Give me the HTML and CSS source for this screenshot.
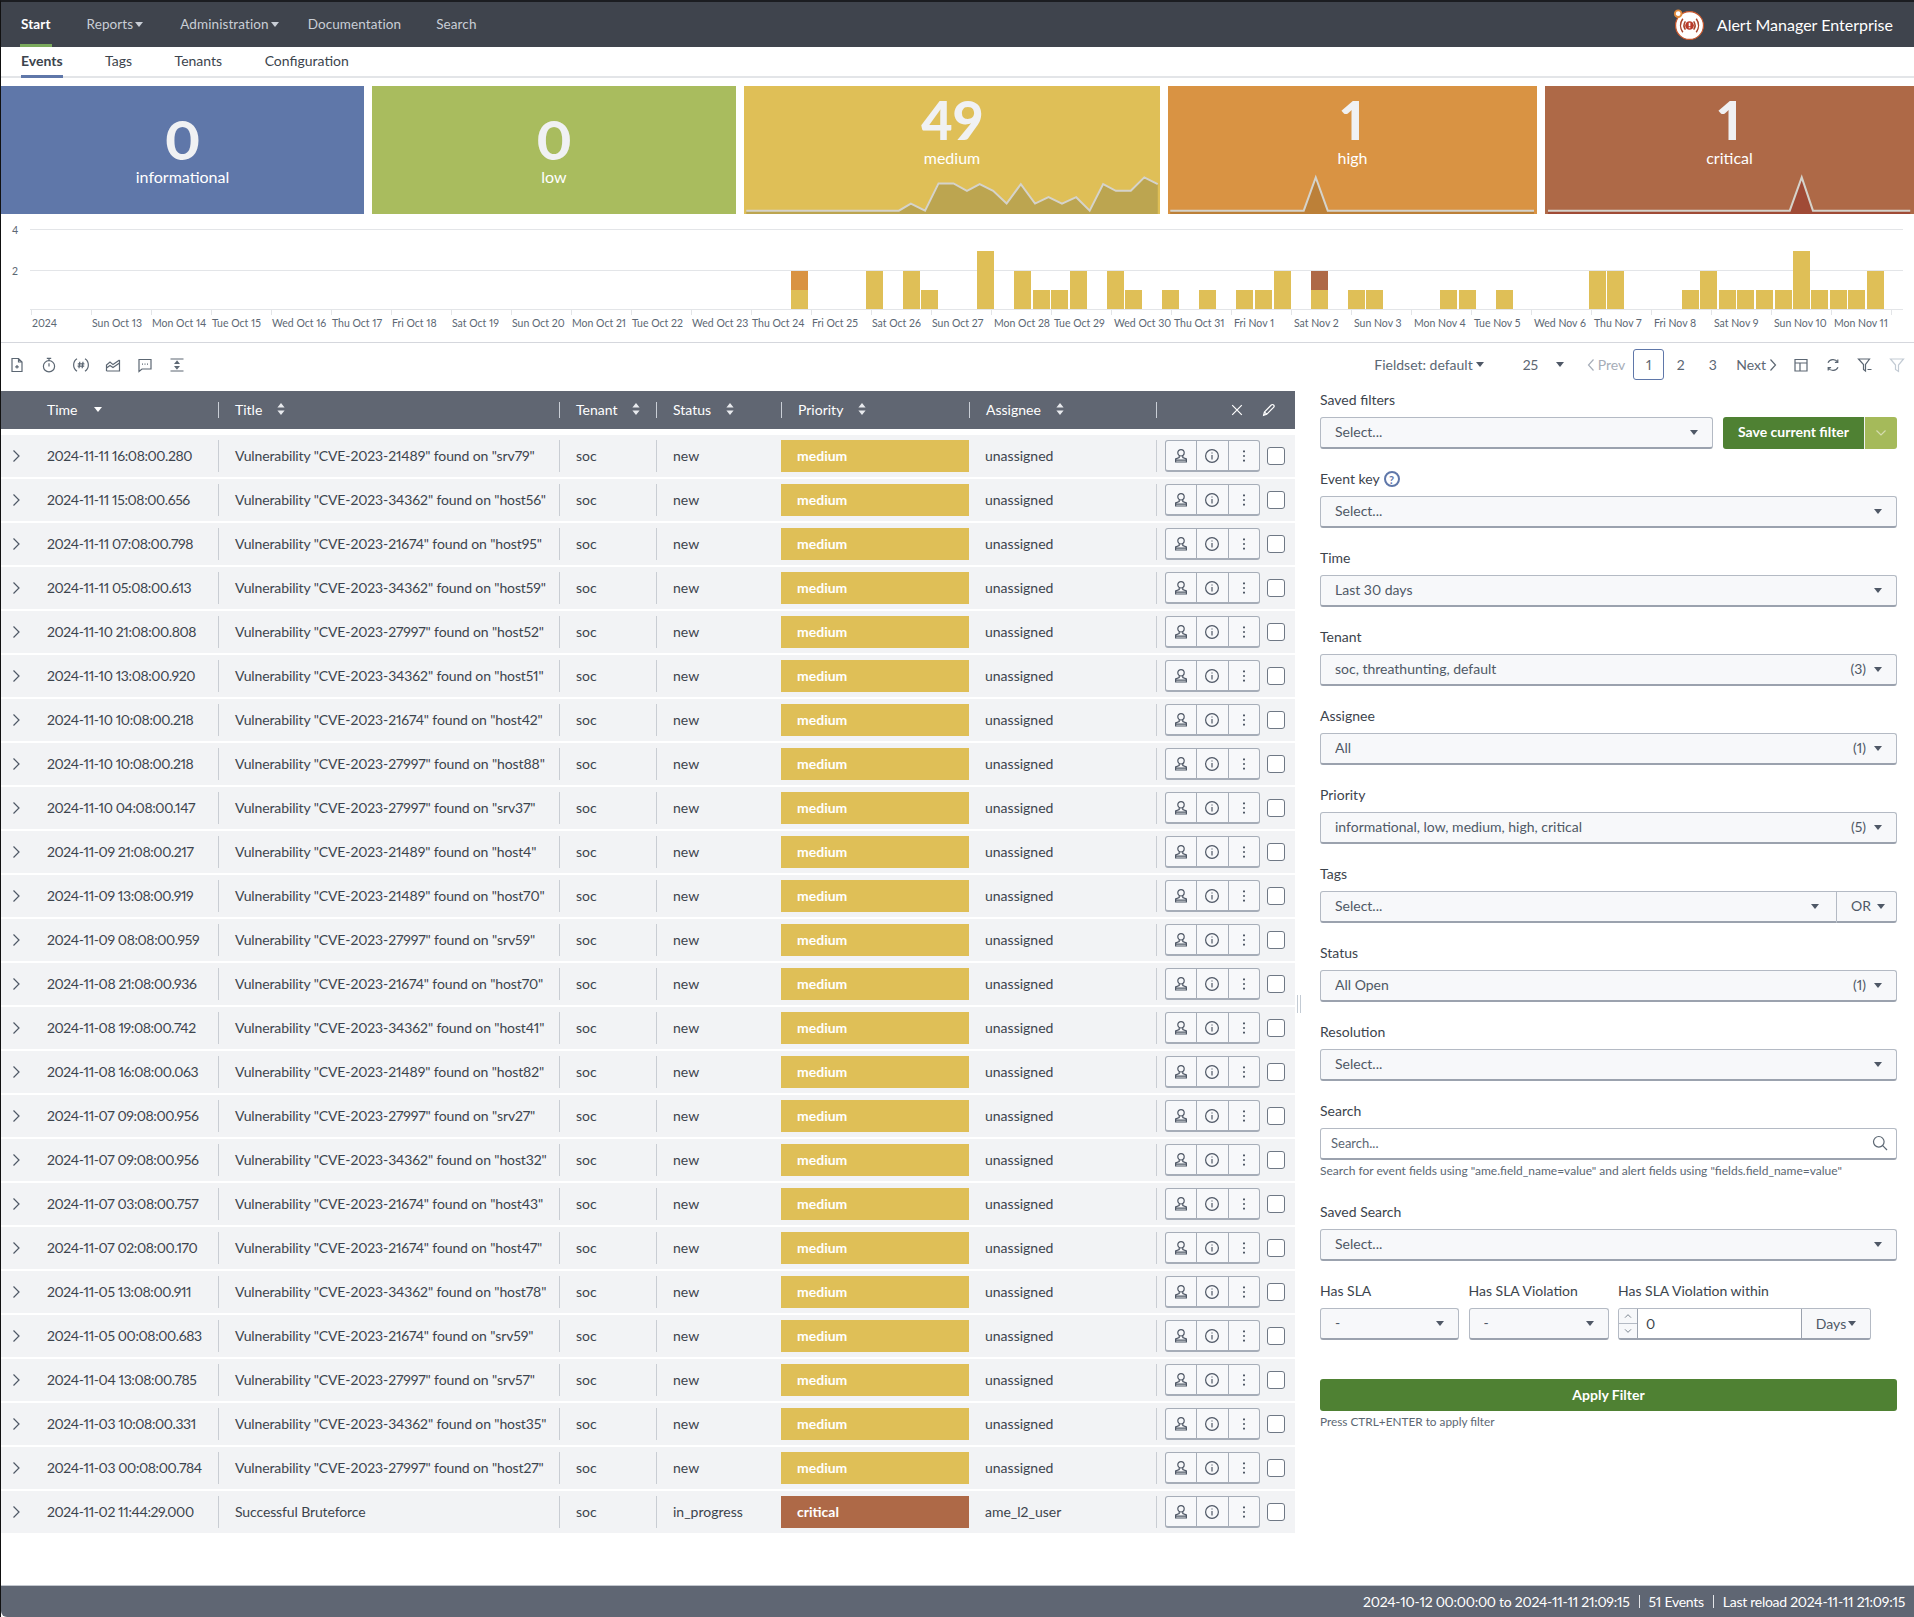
FILE: index.html
```html
<!DOCTYPE html>
<html lang="en">
<head>
<meta charset="utf-8">
<title>Alert Manager Enterprise</title>
<link rel="stylesheet" href="styles.css">
</head>
<body>
<svg class="defs" width="0" height="0" aria-hidden="true">
  <symbol id="i-user" viewBox="0 0 16 16"><circle cx="8" cy="4.8" r="3.2"/><path d="M6.2 8v1.6L2.6 11v3h10.8v-3L9.8 9.6V8M2.6 12.2h10.8"/></symbol>
  <symbol id="i-info" viewBox="0 0 16 16"><circle cx="8" cy="8" r="6.4"/><path d="M8 7v4.4M8 4.6v.9"/></symbol>
  <symbol id="i-more" viewBox="0 0 16 16"><path class="thick" d="M8 2.6v1.6M8 7.2v1.6M8 11.8v1.6"/></symbol>
  <symbol id="i-chev" viewBox="0 0 10 14"><path d="M2.5 1.5 8 7l-5.5 5.5"/></symbol>
  <symbol id="i-sort" viewBox="0 0 10 14"><path class="solid" d="M5 1 8.6 5.6H1.4zM5 13 1.4 8.4h7.2z"/></symbol>
  <symbol id="i-x" viewBox="0 0 14 14"><path d="M2.2 2.2l9.6 9.6M11.8 2.2l-9.6 9.6"/></symbol>
  <symbol id="i-pen" viewBox="0 0 14 14"><path d="M1.6 12.4l.8-3.4 6.9-7a1.6 1.6 0 0 1 2.3 2.3l-6.9 7zM2.4 9l2.6 2.4"/></symbol>
  <symbol id="i-doc" viewBox="0 0 16 16"><path d="M3 1.5h6.5L13 5v9.5H3zM9.5 1.5V5H13M8 8v3.6M6.2 9.8h3.6"/></symbol>
  <symbol id="i-watch" viewBox="0 0 16 16"><circle cx="8" cy="9.3" r="5.6"/><path d="M5.8 1.3h4.4M8 1.3v2.4M8 6.2v3.2"/></symbol>
  <symbol id="i-hash" viewBox="0 0 16 16"><path d="M4 1.8A7.4 7.4 0 0 0 4 14.2M12 1.8a7.4 7.4 0 0 1 0 12.4M6.8 4.8 6 11.2M10 4.8l-.8 6.4M4.8 6.8h6.6M4.6 9.2h6.6"/></symbol>
  <symbol id="i-area" viewBox="0 0 16 16"><path d="M1.5 14h13V3M1.5 14V8l3.5-3 3 2.6L14.500 3M1.500 11l3.500-2.600 3 2.200 6.500-4.600"/></symbol>
  <symbol id="i-chat" viewBox="0 0 16 16"><path d="M2 2.500h12v9.500H5l-3 2.500zM5 7.200h1M7.500 7.200h1M10 7.200h1"/></symbol>
  <symbol id="i-gap" viewBox="0 0 16 16"><path d="M1.500 2h13M1.500 14h13M8 4.300 6.300 6.300h3.400zM8 11.700l1.700-2H6.300z"/></symbol>
  <symbol id="i-table" viewBox="0 0 16 16"><path d="M2 2.500h12v11.500H2zM2 6h12M7 6v8"/></symbol>
  <symbol id="i-reload" viewBox="0 0 16 16"><path d="M3 5.800A5.600 5.600 0 0 1 12.700 5M13 10.200A5.600 5.600 0 0 1 3.300 11M12.800 2.400v2.900H9.900M3.200 13.600v-2.900h2.900"/></symbol>
  <symbol id="i-fminus" viewBox="0 0 16 16"><path d="M1.500 2h11L8.500 7.500V14l-2-1.500v-5zM10.500 12.500h4"/></symbol>
  <symbol id="i-filter" viewBox="0 0 16 16"><path d="M1.500 2h13L9.500 8v6.500l-3-2V8z"/></symbol>
  <symbol id="i-search" viewBox="0 0 16 16"><circle cx="6.800" cy="6.800" r="5.300"/><path d="m10.700 10.700 4.300 4.300"/></symbol>
  <symbol id="i-down" viewBox="0 0 12 8"><path d="M1.500 1.500 6 6l4.500-4.500"/></symbol>
  <symbol id="i-lt" viewBox="0 0 8 14"><path d="M6.500 1.500 1.500 7l5 5.500"/></symbol>
  <symbol id="i-gt" viewBox="0 0 8 14"><path d="M1.500 1.500 6.500 7l-5 5.500"/></symbol>
</svg>

<div class="app">
  <header class="nav">
    <a class="nav-item active">Start</a>
    <a class="nav-item">Reports<i class="caret"></i></a>
    <a class="nav-item">Administration<i class="caret"></i></a>
    <a class="nav-item">Documentation</a>
    <a class="nav-item">Search</a>
    <div class="brand">
      <svg class="logo" viewBox="0 0 30 30">
        <circle class="logo-body" cx="16" cy="16" r="13.500"/>
        <path class="logo-arc" d="M9.500 9.500a11 11 0 0 0 0 13M22.500 9.500a11 11 0 0 1 0 13M12 12a7 7 0 0 0 0 8M20 12a7 7 0 0 1 0 8"/>
        <circle class="logo-core" cx="16" cy="16" r="4.200"/>
        <path class="logo-mark" d="M16 13.400v3.200M16 17.600v1"/>
        <circle class="logo-dot" cx="5" cy="4.500" r="3.200"/>
      </svg>
      <span class="brand-name">Alert Manager Enterprise</span>
    </div>
  </header>

  <nav class="subnav">
    <a class="sub-item active">Events</a>
    <a class="sub-item">Tags</a>
    <a class="sub-item">Tenants</a>
    <a class="sub-item">Configuration</a>
  </nav>

  <section class="cards">
    <div class="card info"><b class="num">0</b><span class="lbl">informational</span></div>
    <div class="card low"><b class="num">0</b><span class="lbl">low</span></div>
    <div class="card medium spark-card"><b class="num">49</b><span class="lbl">medium</span>
      <svg class="spark" viewBox="5 520 556 122" preserveAspectRatio="none"><path class="spark-fill medium-fill" d="M8 642V632H212L228 611 247 632 265 551H285L303 573 320 553 338 573 356 611 375 553 394 611 412 592 430 611 449 592 467 632 485 553 502 573H522L540 533 558 553V642Z"/><path class="spark-line" d="M8 632H212L228 611 247 632 265 551H285L303 573 320 553 338 573 356 611 375 553 394 611 412 592 430 611 449 592 467 632 485 553 502 573H522L540 533 558 553"/></svg>
    </div>
    <div class="card high spark-card"><b class="num">1</b><span class="lbl">high</span>
      <svg class="spark" viewBox="572 520 492 122" preserveAspectRatio="none"><path class="spark-fill high-fill" d="M575 642V632H753L769 533 785 632H1060V642Z"/><path class="spark-line" d="M575 632H753L769 533 785 632H1060"/></svg>
    </div>
    <div class="card critical spark-card"><b class="num">1</b><span class="lbl">critical</span>
      <svg class="spark" viewBox="1075 520 493 122" preserveAspectRatio="none"><path class="spark-fill critical-fill" d="M1079 642V632H1402L1418 533 1433 632H1563V642Z"/><path class="spark-line" d="M1079 632H1402L1418 533 1433 632H1563"/></svg>
    </div>
  </section>

  <svg class="chart" viewBox="1 214 1913 128">
    <g class="grid"><path d="M30 229.500H1903M30 270.500H1903M30 309.500H1903"/>
      <path d="M31.500 309v6M91.500 309v6M151.500 309v6M211.500 309v6M271.500 309v6M331.500 309v6M391.500 309v6M451.500 309v6M511.500 309v6M571.500 309v6M631.500 309v6M691.500 309v6M751.500 309v6M811.500 309v6M871.500 309v6M931.500 309v6M991.500 309v6M1051.500 309v6M1111.500 309v6M1171.500 309v6M1231.500 309v6M1291.500 309v6M1351.500 309v6M1411.500 309v6M1471.500 309v6M1531.500 309v6M1591.500 309v6M1651.500 309v6M1711.500 309v6M1771.500 309v6M1831.500 309v6M1891.500 309v6"/></g>
    <g class="axis-y"><text x="12" y="234">4</text><text x="12" y="275">2</text></g>
    <g class="bars">
      <rect x="791" y="290" width="17" height="19"/><rect class="bar-high" x="791" y="271" width="17" height="19"/>
      <rect x="866" y="271" width="17" height="38"/><rect x="903" y="271" width="17" height="38"/><rect x="921" y="290" width="17" height="19"/>
      <rect x="977" y="251" width="17" height="58"/><rect x="1014" y="271" width="17" height="38"/><rect x="1033" y="290" width="17" height="19"/>
      <rect x="1051" y="290" width="17" height="19"/><rect x="1070" y="271" width="17" height="38"/><rect x="1107" y="271" width="17" height="38"/>
      <rect x="1125" y="290" width="17" height="19"/><rect x="1162" y="290" width="17" height="19"/><rect x="1199" y="290" width="17" height="19"/>
      <rect x="1236" y="290" width="17" height="19"/><rect x="1255" y="290" width="17" height="19"/><rect x="1274" y="271" width="17" height="38"/>
      <rect x="1311" y="290" width="17" height="19"/><rect class="bar-crit" x="1311" y="271" width="17" height="19"/>
      <rect x="1348" y="290" width="17" height="19"/><rect x="1366" y="290" width="17" height="19"/><rect x="1440" y="290" width="17" height="19"/>
      <rect x="1459" y="290" width="17" height="19"/><rect x="1496" y="290" width="17" height="19"/><rect x="1589" y="271" width="17" height="38"/>
      <rect x="1607" y="271" width="17" height="38"/><rect x="1682" y="290" width="17" height="19"/><rect x="1700" y="271" width="17" height="38"/>
      <rect x="1719" y="290" width="17" height="19"/><rect x="1737" y="290" width="17" height="19"/><rect x="1756" y="290" width="17" height="19"/>
      <rect x="1775" y="290" width="17" height="19"/><rect x="1793" y="251" width="17" height="58"/><rect x="1811" y="290" width="17" height="19"/>
      <rect x="1830" y="290" width="17" height="19"/><rect x="1848" y="290" width="17" height="19"/><rect x="1867" y="271" width="17" height="38"/>
    </g>
    <g class="axis-x">
      <text x="32" y="327">2024</text><text x="92" y="327">Sun Oct 13</text><text x="152" y="327">Mon Oct 14</text><text x="212" y="327">Tue Oct 15</text><text x="272" y="327">Wed Oct 16</text><text x="332" y="327">Thu Oct 17</text><text x="392" y="327">Fri Oct 18</text><text x="452" y="327">Sat Oct 19</text><text x="512" y="327">Sun Oct 20</text><text x="572" y="327">Mon Oct 21</text><text x="632" y="327">Tue Oct 22</text><text x="692" y="327">Wed Oct 23</text><text x="752" y="327">Thu Oct 24</text><text x="812" y="327">Fri Oct 25</text><text x="872" y="327">Sat Oct 26</text><text x="932" y="327">Sun Oct 27</text><text x="994" y="327">Mon Oct 28</text><text x="1054" y="327">Tue Oct 29</text><text x="1114" y="327">Wed Oct 30</text><text x="1174" y="327">Thu Oct 31</text><text x="1234" y="327">Fri Nov 1</text><text x="1294" y="327">Sat Nov 2</text><text x="1354" y="327">Sun Nov 3</text><text x="1414" y="327">Mon Nov 4</text><text x="1474" y="327">Tue Nov 5</text><text x="1534" y="327">Wed Nov 6</text><text x="1594" y="327">Thu Nov 7</text><text x="1654" y="327">Fri Nov 8</text><text x="1714" y="327">Sat Nov 9</text><text x="1774" y="327">Sun Nov 10</text><text x="1834" y="327">Mon Nov 11</text>
    </g>
  </svg>

  <section class="toolbar">
    <div class="tb-left">
      <span class="tool"><svg class="ic"><use href="#i-doc"/></svg></span>
      <span class="tool"><svg class="ic"><use href="#i-watch"/></svg></span>
      <span class="tool"><svg class="ic"><use href="#i-hash"/></svg></span>
      <span class="tool"><svg class="ic"><use href="#i-area"/></svg></span>
      <span class="tool"><svg class="ic"><use href="#i-chat"/></svg></span>
      <span class="tool"><svg class="ic"><use href="#i-gap"/></svg></span>
    </div>
    <div class="tb-right">
      <span class="fieldset">Fieldset: default<i class="caret dark"></i></span>
      <span class="perpage">25<i class="caret dark"></i></span>
      <span class="prev"><svg class="lt"><use href="#i-lt"/></svg>Prev</span>
      <span class="page cur">1</span>
      <span class="page">2</span>
      <span class="page">3</span>
      <span class="next">Next<svg class="lt"><use href="#i-gt"/></svg></span>
      <span class="tool"><svg class="ic"><use href="#i-table"/></svg></span>
      <span class="tool"><svg class="ic"><use href="#i-reload"/></svg></span>
      <span class="tool"><svg class="ic"><use href="#i-fminus"/></svg></span>
      <span class="tool faded"><svg class="ic"><use href="#i-filter"/></svg></span>
    </div>
  </section>

  <main class="main">
    <section class="table">
      <div class="thead row-grid">
        <div class="th th-time">Time<i class="caret sort-caret"></i></div>
        <div class="th">Title<svg class="sort"><use href="#i-sort"/></svg></div>
        <div class="th">Tenant<svg class="sort"><use href="#i-sort"/></svg></div>
        <div class="th">Status<svg class="sort"><use href="#i-sort"/></svg></div>
        <div class="th">Priority<svg class="sort"><use href="#i-sort"/></svg></div>
        <div class="th">Assignee<svg class="sort"><use href="#i-sort"/></svg></div>
        <div class="th th-act"><svg class="hd-ic"><use href="#i-x"/></svg><svg class="hd-ic"><use href="#i-pen"/></svg></div>
      </div>

      <div class="row row-grid"><div class="td time"><svg class="exp"><use href="#i-chev"/></svg>2024-11-11 16:08:00.280</div><div class="td sep title">Vulnerability "CVE-2023-21489" found on "srv79"</div><div class="td sep">soc</div><div class="td sep">new</div><div class="td prio medium">medium</div><div class="td">unassigned</div><div class="td sep acts-cell"><div class="acts"><span class="act"><svg class="ic"><use href="#i-user"/></svg></span><span class="act"><svg class="ic"><use href="#i-info"/></svg></span><span class="act"><svg class="ic"><use href="#i-more"/></svg></span></div><span class="check"></span></div></div>
      <div class="row row-grid"><div class="td time"><svg class="exp"><use href="#i-chev"/></svg>2024-11-11 15:08:00.656</div><div class="td sep title">Vulnerability "CVE-2023-34362" found on "host56"</div><div class="td sep">soc</div><div class="td sep">new</div><div class="td prio medium">medium</div><div class="td">unassigned</div><div class="td sep acts-cell"><div class="acts"><span class="act"><svg class="ic"><use href="#i-user"/></svg></span><span class="act"><svg class="ic"><use href="#i-info"/></svg></span><span class="act"><svg class="ic"><use href="#i-more"/></svg></span></div><span class="check"></span></div></div>
      <div class="row row-grid"><div class="td time"><svg class="exp"><use href="#i-chev"/></svg>2024-11-11 07:08:00.798</div><div class="td sep title">Vulnerability "CVE-2023-21674" found on "host95"</div><div class="td sep">soc</div><div class="td sep">new</div><div class="td prio medium">medium</div><div class="td">unassigned</div><div class="td sep acts-cell"><div class="acts"><span class="act"><svg class="ic"><use href="#i-user"/></svg></span><span class="act"><svg class="ic"><use href="#i-info"/></svg></span><span class="act"><svg class="ic"><use href="#i-more"/></svg></span></div><span class="check"></span></div></div>
      <div class="row row-grid"><div class="td time"><svg class="exp"><use href="#i-chev"/></svg>2024-11-11 05:08:00.613</div><div class="td sep title">Vulnerability "CVE-2023-34362" found on "host59"</div><div class="td sep">soc</div><div class="td sep">new</div><div class="td prio medium">medium</div><div class="td">unassigned</div><div class="td sep acts-cell"><div class="acts"><span class="act"><svg class="ic"><use href="#i-user"/></svg></span><span class="act"><svg class="ic"><use href="#i-info"/></svg></span><span class="act"><svg class="ic"><use href="#i-more"/></svg></span></div><span class="check"></span></div></div>
      <div class="row row-grid"><div class="td time"><svg class="exp"><use href="#i-chev"/></svg>2024-11-10 21:08:00.808</div><div class="td sep title">Vulnerability "CVE-2023-27997" found on "host52"</div><div class="td sep">soc</div><div class="td sep">new</div><div class="td prio medium">medium</div><div class="td">unassigned</div><div class="td sep acts-cell"><div class="acts"><span class="act"><svg class="ic"><use href="#i-user"/></svg></span><span class="act"><svg class="ic"><use href="#i-info"/></svg></span><span class="act"><svg class="ic"><use href="#i-more"/></svg></span></div><span class="check"></span></div></div>
      <div class="row row-grid"><div class="td time"><svg class="exp"><use href="#i-chev"/></svg>2024-11-10 13:08:00.920</div><div class="td sep title">Vulnerability "CVE-2023-34362" found on "host51"</div><div class="td sep">soc</div><div class="td sep">new</div><div class="td prio medium">medium</div><div class="td">unassigned</div><div class="td sep acts-cell"><div class="acts"><span class="act"><svg class="ic"><use href="#i-user"/></svg></span><span class="act"><svg class="ic"><use href="#i-info"/></svg></span><span class="act"><svg class="ic"><use href="#i-more"/></svg></span></div><span class="check"></span></div></div>
      <div class="row row-grid"><div class="td time"><svg class="exp"><use href="#i-chev"/></svg>2024-11-10 10:08:00.218</div><div class="td sep title">Vulnerability "CVE-2023-21674" found on "host42"</div><div class="td sep">soc</div><div class="td sep">new</div><div class="td prio medium">medium</div><div class="td">unassigned</div><div class="td sep acts-cell"><div class="acts"><span class="act"><svg class="ic"><use href="#i-user"/></svg></span><span class="act"><svg class="ic"><use href="#i-info"/></svg></span><span class="act"><svg class="ic"><use href="#i-more"/></svg></span></div><span class="check"></span></div></div>
      <div class="row row-grid"><div class="td time"><svg class="exp"><use href="#i-chev"/></svg>2024-11-10 10:08:00.218</div><div class="td sep title">Vulnerability "CVE-2023-27997" found on "host88"</div><div class="td sep">soc</div><div class="td sep">new</div><div class="td prio medium">medium</div><div class="td">unassigned</div><div class="td sep acts-cell"><div class="acts"><span class="act"><svg class="ic"><use href="#i-user"/></svg></span><span class="act"><svg class="ic"><use href="#i-info"/></svg></span><span class="act"><svg class="ic"><use href="#i-more"/></svg></span></div><span class="check"></span></div></div>
      <div class="row row-grid"><div class="td time"><svg class="exp"><use href="#i-chev"/></svg>2024-11-10 04:08:00.147</div><div class="td sep title">Vulnerability "CVE-2023-27997" found on "srv37"</div><div class="td sep">soc</div><div class="td sep">new</div><div class="td prio medium">medium</div><div class="td">unassigned</div><div class="td sep acts-cell"><div class="acts"><span class="act"><svg class="ic"><use href="#i-user"/></svg></span><span class="act"><svg class="ic"><use href="#i-info"/></svg></span><span class="act"><svg class="ic"><use href="#i-more"/></svg></span></div><span class="check"></span></div></div>
      <div class="row row-grid"><div class="td time"><svg class="exp"><use href="#i-chev"/></svg>2024-11-09 21:08:00.217</div><div class="td sep title">Vulnerability "CVE-2023-21489" found on "host4"</div><div class="td sep">soc</div><div class="td sep">new</div><div class="td prio medium">medium</div><div class="td">unassigned</div><div class="td sep acts-cell"><div class="acts"><span class="act"><svg class="ic"><use href="#i-user"/></svg></span><span class="act"><svg class="ic"><use href="#i-info"/></svg></span><span class="act"><svg class="ic"><use href="#i-more"/></svg></span></div><span class="check"></span></div></div>
      <div class="row row-grid"><div class="td time"><svg class="exp"><use href="#i-chev"/></svg>2024-11-09 13:08:00.919</div><div class="td sep title">Vulnerability "CVE-2023-21489" found on "host70"</div><div class="td sep">soc</div><div class="td sep">new</div><div class="td prio medium">medium</div><div class="td">unassigned</div><div class="td sep acts-cell"><div class="acts"><span class="act"><svg class="ic"><use href="#i-user"/></svg></span><span class="act"><svg class="ic"><use href="#i-info"/></svg></span><span class="act"><svg class="ic"><use href="#i-more"/></svg></span></div><span class="check"></span></div></div>
      <div class="row row-grid"><div class="td time"><svg class="exp"><use href="#i-chev"/></svg>2024-11-09 08:08:00.959</div><div class="td sep title">Vulnerability "CVE-2023-27997" found on "srv59"</div><div class="td sep">soc</div><div class="td sep">new</div><div class="td prio medium">medium</div><div class="td">unassigned</div><div class="td sep acts-cell"><div class="acts"><span class="act"><svg class="ic"><use href="#i-user"/></svg></span><span class="act"><svg class="ic"><use href="#i-info"/></svg></span><span class="act"><svg class="ic"><use href="#i-more"/></svg></span></div><span class="check"></span></div></div>
      <div class="row row-grid"><div class="td time"><svg class="exp"><use href="#i-chev"/></svg>2024-11-08 21:08:00.936</div><div class="td sep title">Vulnerability "CVE-2023-21674" found on "host70"</div><div class="td sep">soc</div><div class="td sep">new</div><div class="td prio medium">medium</div><div class="td">unassigned</div><div class="td sep acts-cell"><div class="acts"><span class="act"><svg class="ic"><use href="#i-user"/></svg></span><span class="act"><svg class="ic"><use href="#i-info"/></svg></span><span class="act"><svg class="ic"><use href="#i-more"/></svg></span></div><span class="check"></span></div></div>
      <div class="row row-grid"><div class="td time"><svg class="exp"><use href="#i-chev"/></svg>2024-11-08 19:08:00.742</div><div class="td sep title">Vulnerability "CVE-2023-34362" found on "host41"</div><div class="td sep">soc</div><div class="td sep">new</div><div class="td prio medium">medium</div><div class="td">unassigned</div><div class="td sep acts-cell"><div class="acts"><span class="act"><svg class="ic"><use href="#i-user"/></svg></span><span class="act"><svg class="ic"><use href="#i-info"/></svg></span><span class="act"><svg class="ic"><use href="#i-more"/></svg></span></div><span class="check"></span></div></div>
      <div class="row row-grid"><div class="td time"><svg class="exp"><use href="#i-chev"/></svg>2024-11-08 16:08:00.063</div><div class="td sep title">Vulnerability "CVE-2023-21489" found on "host82"</div><div class="td sep">soc</div><div class="td sep">new</div><div class="td prio medium">medium</div><div class="td">unassigned</div><div class="td sep acts-cell"><div class="acts"><span class="act"><svg class="ic"><use href="#i-user"/></svg></span><span class="act"><svg class="ic"><use href="#i-info"/></svg></span><span class="act"><svg class="ic"><use href="#i-more"/></svg></span></div><span class="check"></span></div></div>
      <div class="row row-grid"><div class="td time"><svg class="exp"><use href="#i-chev"/></svg>2024-11-07 09:08:00.956</div><div class="td sep title">Vulnerability "CVE-2023-27997" found on "srv27"</div><div class="td sep">soc</div><div class="td sep">new</div><div class="td prio medium">medium</div><div class="td">unassigned</div><div class="td sep acts-cell"><div class="acts"><span class="act"><svg class="ic"><use href="#i-user"/></svg></span><span class="act"><svg class="ic"><use href="#i-info"/></svg></span><span class="act"><svg class="ic"><use href="#i-more"/></svg></span></div><span class="check"></span></div></div>
      <div class="row row-grid"><div class="td time"><svg class="exp"><use href="#i-chev"/></svg>2024-11-07 09:08:00.956</div><div class="td sep title">Vulnerability "CVE-2023-34362" found on "host32"</div><div class="td sep">soc</div><div class="td sep">new</div><div class="td prio medium">medium</div><div class="td">unassigned</div><div class="td sep acts-cell"><div class="acts"><span class="act"><svg class="ic"><use href="#i-user"/></svg></span><span class="act"><svg class="ic"><use href="#i-info"/></svg></span><span class="act"><svg class="ic"><use href="#i-more"/></svg></span></div><span class="check"></span></div></div>
      <div class="row row-grid"><div class="td time"><svg class="exp"><use href="#i-chev"/></svg>2024-11-07 03:08:00.757</div><div class="td sep title">Vulnerability "CVE-2023-21674" found on "host43"</div><div class="td sep">soc</div><div class="td sep">new</div><div class="td prio medium">medium</div><div class="td">unassigned</div><div class="td sep acts-cell"><div class="acts"><span class="act"><svg class="ic"><use href="#i-user"/></svg></span><span class="act"><svg class="ic"><use href="#i-info"/></svg></span><span class="act"><svg class="ic"><use href="#i-more"/></svg></span></div><span class="check"></span></div></div>
      <div class="row row-grid"><div class="td time"><svg class="exp"><use href="#i-chev"/></svg>2024-11-07 02:08:00.170</div><div class="td sep title">Vulnerability "CVE-2023-21674" found on "host47"</div><div class="td sep">soc</div><div class="td sep">new</div><div class="td prio medium">medium</div><div class="td">unassigned</div><div class="td sep acts-cell"><div class="acts"><span class="act"><svg class="ic"><use href="#i-user"/></svg></span><span class="act"><svg class="ic"><use href="#i-info"/></svg></span><span class="act"><svg class="ic"><use href="#i-more"/></svg></span></div><span class="check"></span></div></div>
      <div class="row row-grid"><div class="td time"><svg class="exp"><use href="#i-chev"/></svg>2024-11-05 13:08:00.911</div><div class="td sep title">Vulnerability "CVE-2023-34362" found on "host78"</div><div class="td sep">soc</div><div class="td sep">new</div><div class="td prio medium">medium</div><div class="td">unassigned</div><div class="td sep acts-cell"><div class="acts"><span class="act"><svg class="ic"><use href="#i-user"/></svg></span><span class="act"><svg class="ic"><use href="#i-info"/></svg></span><span class="act"><svg class="ic"><use href="#i-more"/></svg></span></div><span class="check"></span></div></div>
      <div class="row row-grid"><div class="td time"><svg class="exp"><use href="#i-chev"/></svg>2024-11-05 00:08:00.683</div><div class="td sep title">Vulnerability "CVE-2023-21674" found on "srv59"</div><div class="td sep">soc</div><div class="td sep">new</div><div class="td prio medium">medium</div><div class="td">unassigned</div><div class="td sep acts-cell"><div class="acts"><span class="act"><svg class="ic"><use href="#i-user"/></svg></span><span class="act"><svg class="ic"><use href="#i-info"/></svg></span><span class="act"><svg class="ic"><use href="#i-more"/></svg></span></div><span class="check"></span></div></div>
      <div class="row row-grid"><div class="td time"><svg class="exp"><use href="#i-chev"/></svg>2024-11-04 13:08:00.785</div><div class="td sep title">Vulnerability "CVE-2023-27997" found on "srv57"</div><div class="td sep">soc</div><div class="td sep">new</div><div class="td prio medium">medium</div><div class="td">unassigned</div><div class="td sep acts-cell"><div class="acts"><span class="act"><svg class="ic"><use href="#i-user"/></svg></span><span class="act"><svg class="ic"><use href="#i-info"/></svg></span><span class="act"><svg class="ic"><use href="#i-more"/></svg></span></div><span class="check"></span></div></div>
      <div class="row row-grid"><div class="td time"><svg class="exp"><use href="#i-chev"/></svg>2024-11-03 10:08:00.331</div><div class="td sep title">Vulnerability "CVE-2023-34362" found on "host35"</div><div class="td sep">soc</div><div class="td sep">new</div><div class="td prio medium">medium</div><div class="td">unassigned</div><div class="td sep acts-cell"><div class="acts"><span class="act"><svg class="ic"><use href="#i-user"/></svg></span><span class="act"><svg class="ic"><use href="#i-info"/></svg></span><span class="act"><svg class="ic"><use href="#i-more"/></svg></span></div><span class="check"></span></div></div>
      <div class="row row-grid"><div class="td time"><svg class="exp"><use href="#i-chev"/></svg>2024-11-03 00:08:00.784</div><div class="td sep title">Vulnerability "CVE-2023-27997" found on "host27"</div><div class="td sep">soc</div><div class="td sep">new</div><div class="td prio medium">medium</div><div class="td">unassigned</div><div class="td sep acts-cell"><div class="acts"><span class="act"><svg class="ic"><use href="#i-user"/></svg></span><span class="act"><svg class="ic"><use href="#i-info"/></svg></span><span class="act"><svg class="ic"><use href="#i-more"/></svg></span></div><span class="check"></span></div></div>
      <div class="row row-grid"><div class="td time"><svg class="exp"><use href="#i-chev"/></svg>2024-11-02 11:44:29.000</div><div class="td sep title">Successful Bruteforce</div><div class="td sep">soc</div><div class="td sep">in_progress</div><div class="td prio critical">critical</div><div class="td">ame_l2_user</div><div class="td sep acts-cell"><div class="acts"><span class="act"><svg class="ic"><use href="#i-user"/></svg></span><span class="act"><svg class="ic"><use href="#i-info"/></svg></span><span class="act"><svg class="ic"><use href="#i-more"/></svg></span></div><span class="check"></span></div></div>
    </section>

    <span class="handle"></span>

    <aside class="panel">
      <div class="field"><label class="flabel">Saved filters</label>
        <div class="save-row"><div class="select grow"><span class="val">Select...</span><i class="caret dark"></i></div>
          <div class="save-btn"><span class="save-main">Save current filter</span><span class="save-more"><svg class="down"><use href="#i-down"/></svg></span></div></div></div>
      <div class="field"><label class="flabel">Event key <span class="help">?</span></label><div class="select"><span class="val">Select...</span><i class="caret dark"></i></div></div>
      <div class="field"><label class="flabel">Time</label><div class="select"><span class="val">Last 30 days</span><i class="caret dark"></i></div></div>
      <div class="field"><label class="flabel">Tenant</label><div class="select"><span class="val">soc, threathunting, default</span><span class="count">(3)</span><i class="caret dark"></i></div></div>
      <div class="field"><label class="flabel">Assignee</label><div class="select"><span class="val">All</span><span class="count">(1)</span><i class="caret dark"></i></div></div>
      <div class="field"><label class="flabel">Priority</label><div class="select"><span class="val">informational, low, medium, high, critical</span><span class="count">(5)</span><i class="caret dark"></i></div></div>
      <div class="field"><label class="flabel">Tags</label><div class="joined"><div class="select grow join-l"><span class="val">Select...</span><i class="caret dark"></i></div><div class="select or join-r"><span>OR</span><i class="caret dark"></i></div></div></div>
      <div class="field"><label class="flabel">Status</label><div class="select"><span class="val">All Open</span><span class="count">(1)</span><i class="caret dark"></i></div></div>
      <div class="field"><label class="flabel">Resolution</label><div class="select"><span class="val">Select...</span><i class="caret dark"></i></div></div>
      <div class="field field-search"><label class="flabel">Search</label><div class="search"><span class="val">Search...</span><svg class="search-ic"><use href="#i-search"/></svg></div>
        <p class="hint">Search for event fields using "ame.field_name=value" and alert fields using "fields.field_name=value"</p></div>
      <div class="field"><label class="flabel">Saved Search</label><div class="select"><span class="val">Select...</span><i class="caret dark"></i></div></div>
      <div class="field sla">
        <div class="sla-col"><label class="flabel">Has SLA</label><div class="select"><span class="val">-</span><i class="caret dark"></i></div></div>
        <div class="sla-col mid"><label class="flabel">Has SLA Violation</label><div class="select"><span class="val">-</span><i class="caret dark"></i></div></div>
        <div class="sla-col wide"><label class="flabel">Has SLA Violation within</label>
          <div class="within"><div class="spin"><span class="spin-btn"><svg class="spin-ic up"><use href="#i-down"/></svg></span><span class="spin-btn"><svg class="spin-ic"><use href="#i-down"/></svg></span></div><span class="within-val">0</span><span class="days">Days<i class="caret dark"></i></span></div></div>
      </div>
      <div class="apply">Apply Filter</div>
      <p class="press">Press CTRL+ENTER to apply filter</p>
    </aside>
  </main>

  <footer class="footer">
    <span>2024-10-12 00:00:00 to 2024-11-11 21:09:15</span><i class="bar"></i><span>51 Events</span><i class="bar"></i><span>Last reload 2024-11-11 21:09:15</span>
  </footer>
</div>
</body>
</html>
```
FILE: styles.css
```css
* { box-sizing: border-box; }
html, body { margin: 0; padding: 0; background: #fff; }
body { font-family: "Lato", "Liberation Sans", sans-serif; font-size: 14px; color: #3c444d; font-variant-numeric: proportional-nums; }
.defs { position: absolute; }
svg { display: block; }

symbol path, symbol circle { fill: none; stroke: currentColor; stroke-width: 1.200; }
symbol path.solid { fill: currentColor; stroke: none; }
symbol path.thick { stroke-width: 2; }

.app { width: 1914px; height: 1617px; display: flex; flex-direction: column; border-left: 1px solid #111; border-top: 2px solid #1b1d21; overflow: hidden; background: #fff; }

/* top nav */
.nav { height: 45px; flex: none; display: flex; align-items: stretch; background: #3f444d; padding-left: 19px; color: #c9ced6; }
.nav-item { display: flex; align-items: center; margin-right: 33px; padding: 0 1px 1px; font-size: 13.500px; letter-spacing: .1px; position: relative; }
.nav-item:nth-child(1) { margin-right: 34px; }
.nav-item:nth-child(2) { margin-right: 35px; }
.nav-item:nth-child(3) { margin-right: 27px; }
.nav-item.active { color: #fff; font-weight: 700; }
.nav-item.active::after { content: ""; position: absolute; left: 0; right: 0; bottom: 0; height: 3px; background: #7aa95c; }
.caret { display: inline-block; width: 0; height: 0; margin-left: 2px; border-left: 4px solid transparent; border-right: 4px solid transparent; border-top: 5px solid currentColor; }
.caret.dark { color: #4f5866; }
.brand { margin-left: auto; display: flex; align-items: center; padding-right: 21px; color: #fff; }
.logo { width: 31px; height: 31px; margin-right: 13px; }
.logo-body { fill: #fff; stroke: #c8562c; stroke-width: 1.200; }
.logo-arc { fill: none; stroke: #a8432a; stroke-width: 1.500; }
.logo-core { fill: #b93a2a; }
.logo-mark { fill: none; stroke: #fff; stroke-width: 1.600; }
.logo-dot { fill: #fff; stroke: #e08a3c; stroke-width: 1.800; }
.brand-name { font-size: 16px; }

/* sub nav */
.subnav { height: 31px; flex: none; display: flex; padding-left: 20px; border-bottom: 2px solid #e3e5e8; gap: 42.500px; }
.sub-item { height: 31px; display: flex; align-items: center; padding-bottom: 2px; font-size: 14px; color: #3c444d; border-bottom: 3px solid transparent; }
.sub-item.active { font-weight: 700; border-bottom-color: #5f77a9; }

/* cards */
.cards { flex: none; height: 128px; margin-top: 8px; display: grid; grid-template-columns: 363px 364px 416px 369px 369px; column-gap: 8px; }
.card { position: relative; display: flex; flex-direction: column; align-items: center; color: #fff; padding-top: 27px; overflow: hidden; }
.spark-card { padding-top: 7px; }
.num { font-size: 54px; line-height: 54px; font-weight: 900; color: #f0f1f3; }
.lbl { font-size: 16px; line-height: 20px; margin-top: 0; }
.spark-card .lbl { margin-top: 1px; }
.info { background: #5f77a9; }
.low { background: #a9bc5e; }
.medium { background: #dfbf57; }
.high { background: #d99343; }
.critical { background: #ae6947; }
.spark { position: absolute; left: 0; right: 0; bottom: 0; width: 100%; height: 41px; }
.spark-fill { stroke: none; }
.medium-fill { fill: #bca550; }
.high-fill { fill: #bc8038; }
.critical-fill { fill: #a04b36; }
.spark-line { fill: none; stroke: #d5d3cb; stroke-width: 2; vector-effect: non-scaling-stroke; }

/* chart */
.chart { flex: none; width: 1913px; height: 128px; }
.grid path { fill: none; stroke: #e3e5e8; stroke-width: 1; }
.bars rect { fill: #dfbf57; }
.bars rect.bar-high { fill: #d99343; }
.bars rect.bar-crit { fill: #ae6947; }
.axis-x text, .axis-y text { font-family: "Lato", "Liberation Sans", sans-serif; font-size: 10.500px; fill: #5c6773; }

/* toolbar */
.toolbar { flex: none; height: 49px; display: flex; align-items: flex-start; justify-content: space-between; border-top: 1px solid #d5d7dd; padding-top: 6px; color: #5c6773; }
.tb-left, .tb-right { display: flex; align-items: center; height: 31px; }
.tb-right { padding-right: 1px; }
.tool { width: 32px; height: 31px; display: flex; align-items: center; justify-content: center; color: #5c6773; }
.tool.faded { color: #c3cbd4; }
.ic { width: 16px; height: 16px; }
.fieldset { font-size: 14px; display: flex; align-items: center; }
.fieldset .caret { margin-left: 3px; }
.perpage { display: flex; align-items: center; margin-left: 34px; width: 46px; justify-content: space-between; font-size: 14px; padding-left: 5px; }
.prev { display: flex; align-items: center; gap: 3px; margin-left: 23px; color: #a6adb8; font-size: 14px; }
.next { display: flex; align-items: center; gap: 3px; margin-left: 8px; margin-right: 8px; font-size: 14px; }
.lt { width: 8px; height: 14px; }
.page { width: 31px; height: 31px; display: flex; align-items: center; justify-content: center; margin-left: 1px; font-size: 14px; }
.page.cur { margin-left: 8px; border: 1px solid #5f77a9; border-radius: 3px; }

/* main */
.main { flex: 1; min-height: 0; display: flex; position: relative; }
.table { width: 1294px; flex: none; }
.row-grid { display: grid; grid-template-columns: 217px 341px 97px 125px 188px 187px 139px; }
.thead { height: 38px; background: #606672; color: #fff; align-items: center; margin-bottom: 6px; }
.th { height: 16px; display: flex; align-items: center; padding: 0 0 2px 16px; border-left: 1px solid #c9ced6; font-size: 14px; }
.th-time { padding-left: 46px; border-left: 0; }
.sort { width: 10px; height: 14px; margin-left: 14px; color: #e8eaee; }
.sort-caret { margin-left: 16px; }
.th-act { justify-content: flex-end; padding: 0 19px 0 0; gap: 18px; }
.hd-ic { width: 14px; height: 14px; }
.row { height: 42px; margin-bottom: 2px; background: #f2f3f5; padding: 5px 0; }
.td { height: 32px; display: flex; align-items: center; padding: 0 0 2px 16px; white-space: nowrap; font-size: 14px; color: #3c444d; }
.td.sep { border-left: 1px solid #c9cdd3; }
.td.time { padding-left: 0; letter-spacing: -.4px; }
.td.title { letter-spacing: -.12px; }
.exp { width: 10px; height: 14px; margin: 2px 26px 0 10px; color: #4f5866; }
.prio { color: #fff; font-weight: 700; }
.acts-cell { padding: 0 0 0 8px; gap: 7px; }
.acts { display: flex; width: 95px; height: 32px; border: 1px solid #a6adb8; border-bottom-width: 2px; border-radius: 3px; background: #f7f8fa; }
.act { flex: 1; display: flex; align-items: center; justify-content: center; border-left: 1px solid #a6adb8; color: #4f5866; }
.act:first-child { border-left: 0; }
.check { width: 18px; height: 18px; border: 1px solid #6f7885; border-radius: 3px; background: #fff; }

.handle { position: absolute; left: 1296px; top: 604px; width: 4px; height: 18px; border-left: 1px solid #c3cbd4; border-right: 1px solid #c3cbd4; }

/* panel */
.panel { margin-left: 25px; width: 577px; flex: none; margin-top: -1px; }
.field { margin-bottom: 20px; }
.flabel { display: flex; align-items: center; gap: 3px; height: 20px; margin-bottom: 7px; padding-bottom: 2px; font-size: 14px; color: #3c444d; }
.help { width: 16px; height: 16px; border: 2px solid #5f77a9; border-radius: 50%; color: #5f77a9; font-size: 11px; font-weight: 700; display: flex; align-items: center; justify-content: center; margin: 2px 0 0 1px; }
.select { height: 32px; display: flex; align-items: center; background: #f7f8fa; border: 1px solid #b4bac4; border-bottom: 2px solid #9ba2ae; border-radius: 3px; padding: 0 14px 2px; font-size: 14px; color: #4f5866; }
.select .val { flex: 1; white-space: nowrap; overflow: hidden; }
.select .caret { margin-top: 2px; }
.count { margin-right: 6px; }
.save-row { display: flex; gap: 10px; }
.grow { flex: 1; }
.save-btn { width: 174px; height: 32px; display: flex; border-radius: 3px; overflow: hidden; color: #fff; font-weight: 700; font-size: 14px; }
.save-main { flex: 1; display: flex; align-items: center; justify-content: center; padding-bottom: 3px; background: #4f8133; }
.save-more { width: 33px; display: flex; align-items: center; justify-content: center; background: #a5ba5a; border-left: 1px solid #f0f1f3; color: #d5dcae; }
.down { width: 12px; height: 8px; }
.joined { display: flex; }
.join-l { border-radius: 3px 0 0 3px; padding-right: 17px; }
.join-r { border-radius: 0 3px 3px 0; border-left: 0; }
.or { width: 60px; padding: 0 0 2px 14px; gap: 4px; }
.search { height: 32px; display: flex; align-items: center; justify-content: space-between; border: 1px solid #b4bac4; border-bottom: 2px solid #9ba2ae; border-radius: 3px; padding: 0 8px 1px 10px; background: #fff; font-size: 13px; color: #5c6773; }
.search-ic { width: 16px; height: 16px; color: #5c6773; }
.field-search { margin-bottom: 22px; }
.hint { margin: 2px 0 0; height: 18px; line-height: 18px; font-size: 12px; color: #5c6773; white-space: nowrap; }
.sla { display: flex; gap: 9.500px; margin-bottom: 39px; }
.sla-col { width: 139px; }
.sla-col.mid { width: 140px; }
.sla-col.wide { width: 253px; }
.within { display: flex; height: 32px; border: 1px solid #b4bac4; border-bottom: 2px solid #9ba2ae; border-radius: 3px; overflow: hidden; font-size: 14px; }
.spin { width: 19px; display: flex; flex-direction: column; background: #f7f8fa; border-right: 1px solid #9ba2ae; }
.spin-btn { flex: 1; display: flex; align-items: center; justify-content: center; }
.spin-btn + .spin-btn { border-top: 1px solid #b4bac4; }
.spin-ic { width: 8px; height: 6px; color: #5c6773; }
.spin-ic.up { transform: scaleY(-1); }
.within-val { flex: 1; display: flex; align-items: center; padding: 0 0 1px 8px; }
.days { width: 69px; display: flex; align-items: center; justify-content: center; background: #f7f8fa; border-left: 1px solid #9ba2ae; color: #4f5866; }
.apply { height: 32px; display: flex; align-items: center; justify-content: center; padding-bottom: 2px; background: #4f8133; border-radius: 3px; color: #fff; font-weight: 700; font-size: 14px; }
.press { margin: 2px 0 0; height: 18px; line-height: 18px; font-size: 11.800px; color: #5c6773; }

/* footer */
.footer { flex: none; height: 32px; display: flex; align-items: center; justify-content: flex-end; padding: 0 9px 1px 0; background: #5f6673; border-top: 1px solid #c3c7ce; color: #fff; font-size: 14px; letter-spacing: -.27px; border-bottom-left-radius: 6px; }
.footer .bar { width: 1px; height: 13px; background: #e3e5e8; margin: 0 9px; }
```
